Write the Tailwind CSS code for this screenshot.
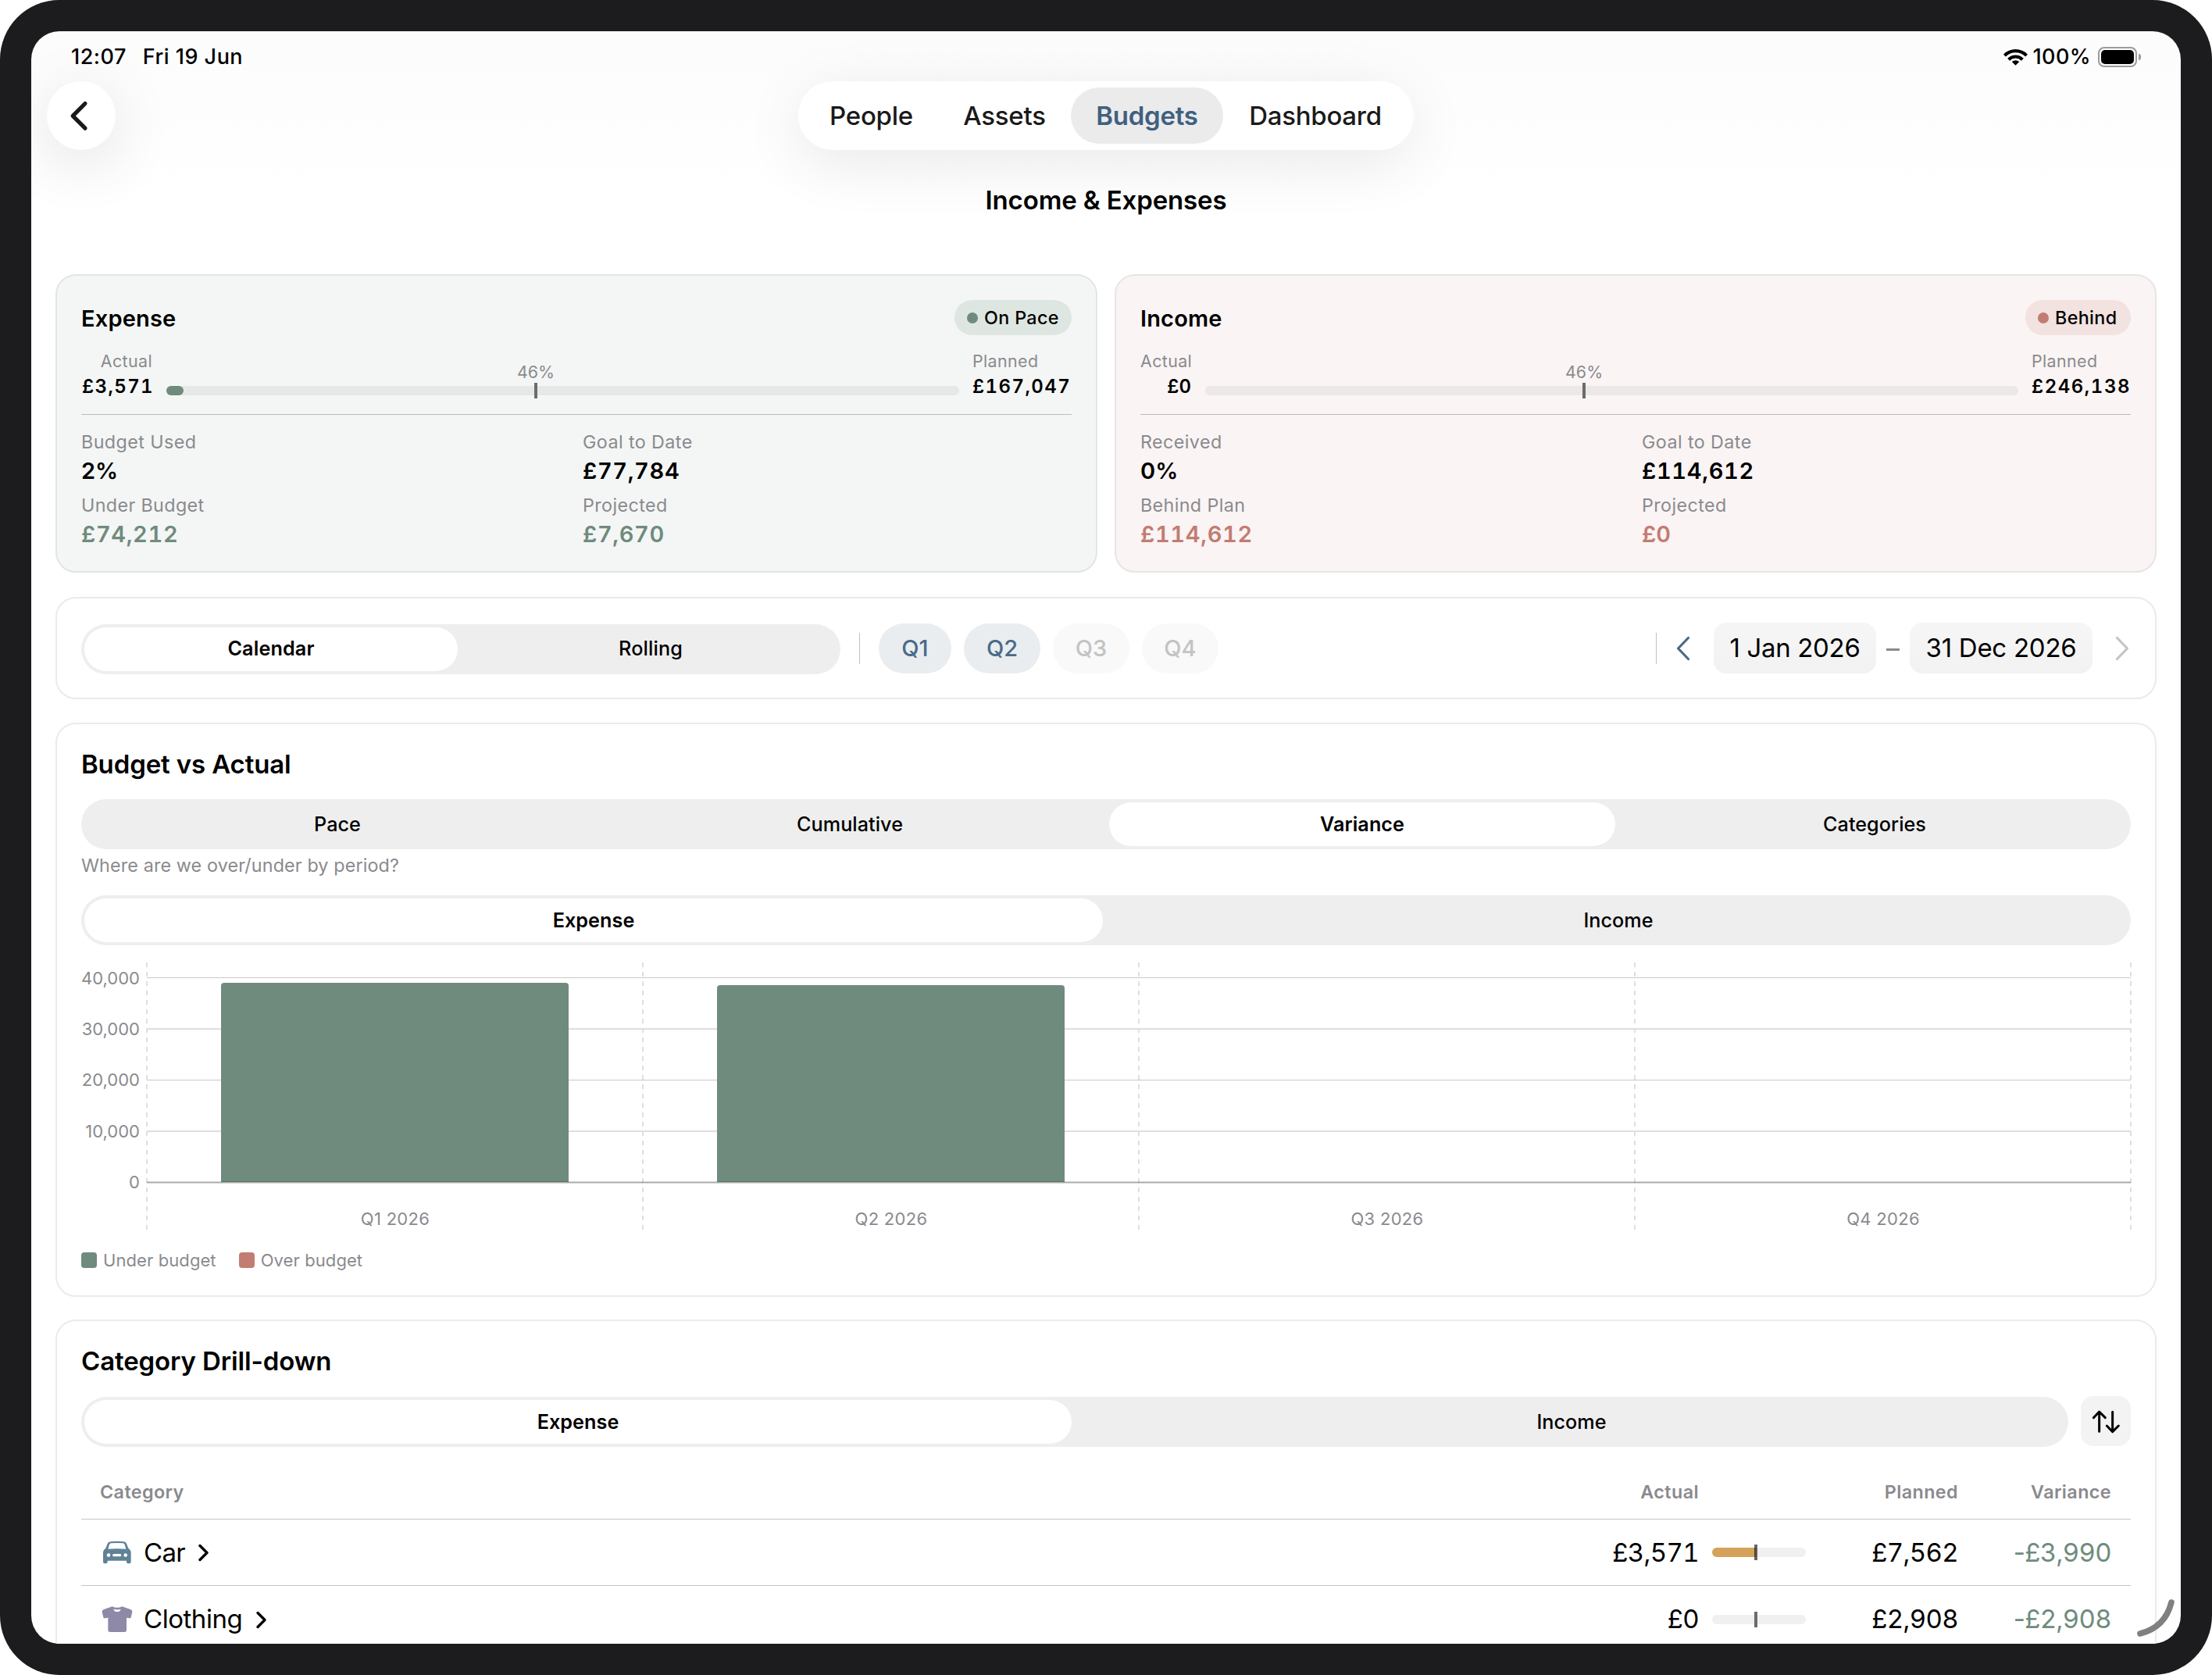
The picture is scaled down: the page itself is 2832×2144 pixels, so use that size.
<!DOCTYPE html>
<html lang="en">
<head>
  <meta charset="UTF-8" />
  <meta name="viewport" content="width=device-width, initial-scale=1.0">
  <title>Income &amp; Expenses</title>
  <script src="https://cdn.jsdelivr.net/npm/@tailwindcss/browser@4"></script>
</head>
<body class="bg-white font-['Inter','Liberation_Sans',sans-serif] text-black">
  <!-- Device frame -->
  <div class="w-[2832px] h-[2144px] bg-[#1c1c1e] rounded-[76px] p-10 overflow-hidden">
    <div class="relative h-full rounded-[36px] overflow-hidden bg-white bg-linear-to-b from-[#fcfcfc] from-0% to-white to-[220px]">

      <!-- Status bar -->
      <div class="flex h-16 items-center pl-[51px] pr-[51px] pt-[2px] text-[27px] font-medium tracking-[0.018em]">
        <span>12:07</span>
        <span class="ml-[21px]">Fri 19 Jun</span>
        <svg class="ml-auto w-[31px] h-[22px]" viewBox="0 0 30 21" fill="none" stroke="#000" stroke-width="3.9">
          <path d="M1.400 8.600A19 19 0 0 1 28.600 8.600" />
          <path d="M6.400 13.600A12.200 12.200 0 0 1 23.600 13.600" />
          <path d="M15 20.800l-4.600-4.400a6.600 6.600 0 0 1 9.200 0z" fill="#000" stroke="none" />
        </svg>
        <span class="ml-[7px] tracking-[0.015em]">100%</span>
        <div class="ml-[9px] w-[50px] h-[26px] rounded-[8px] border-2 border-[#9b9b9b] p-[2px]">
          <div class="h-full rounded-[5px] bg-black"></div>
        </div>
        <div class="ml-[2px] w-[3px] h-[8px] rounded-r-full bg-[#9b9b9b]"></div>
      </div>

      <!-- Navigation -->
      <header class="grid grid-cols-[88px_1fr_88px] px-5">
        <button class="flex size-[88px] items-center justify-center rounded-full bg-white shadow-[0_16px_80px_rgba(0,0,0,0.12)]">
          <svg class="size-[88px]" viewBox="0 0 88 88" fill="none" stroke="#1a1a1a" stroke-width="5.2" stroke-linecap="round" stroke-linejoin="round">
            <path d="M49 28.500L33.200 44.300L49 60.200" />
          </svg>
        </button>
        <nav class="mx-auto flex h-[88px] rounded-full bg-white p-2 text-[33px] font-medium tracking-[-0.008em] text-[#1a1a1a] shadow-[0_16px_80px_rgba(0,0,0,0.09)]">
          <a class="flex w-[171px] items-center justify-center pt-[2px]">People</a>
          <a class="flex w-[170px] items-center justify-center pt-[2px]">Assets</a>
          <a class="flex w-[195px] items-center justify-center rounded-full bg-[#ebebeb] pt-[2px] font-semibold text-[#40607f]">Budgets</a>
          <a class="flex w-[236px] items-center justify-center pt-[2px]">Dashboard</a>
        </nav>
      </header>
      <h1 class="flex h-32 items-center justify-center pt-[2px] text-[33px] font-semibold tracking-[-0.004em]">Income &amp; Expenses</h1>

      <main class="px-[31px] pt-[31px]">
        <!-- Summary cards -->
        <div class="grid grid-cols-2 gap-[22px]">
          <section class="h-[382px] rounded-[26px] border-2 border-[#e3e5e4] bg-[#f4f6f5] px-[31px] pt-[31px]">
            <div class="flex h-[45px] items-center justify-between">
              <h2 class="pt-[3px] text-[29px] font-semibold tracking-[0.006em]">Expense</h2>
              <span class="flex h-[45px] w-[150px] items-center gap-[8px] rounded-full bg-[#dee6e2] pl-4 pt-px text-[23.3px] font-medium tracking-[0.015em]"><i class="size-[14px] rounded-full bg-[#6f8b7d]"></i>On Pace</span>
            </div>
            <div class="mt-[19px] flex h-[66px]">
              <div class="flex w-[91px] flex-col items-end">
                <p class="h-7 text-[21.4px] leading-7 tracking-[0.018em] text-[#8a8a8e]">Actual</p>
                <p class="-mr-[2px] h-[38px] text-[24px] font-semibold leading-[38px] tracking-[0.058em] tabular-nums">£3,571</p>
              </div>
              <div class="relative ml-[18px] mr-4 mt-[46px] h-3 flex-1 rounded-full bg-[#e6e8e7]">
                <div class="h-full w-[22px] rounded-full bg-[#6f8b7d]"></div>
                <div class="absolute left-[46.4%] top-[-4px] h-5 w-1 bg-[#6b6c6c]"></div>
                <span class="absolute left-[46.6%] top-[-32px] -translate-x-1/2 text-[21.4px] leading-7 text-[#8a8a8e]">46%</span>
              </div>
              <div class="w-[128px] pl-px">
                <p class="h-7 text-[21.4px] leading-7 tracking-[0.018em] text-[#8a8a8e]">Planned</p>
                <p class="h-[38px] text-[24px] font-semibold leading-[38px] tracking-[0.06em] tabular-nums">£167,047</p>
              </div>
            </div>
            <div class="mt-4 h-px bg-[#bcbdbd]"></div>
            <div class="mt-5 grid grid-cols-2 gap-x-4 gap-y-[7px]">
              <div>
                <p class="text-[23.3px] leading-[30px] tracking-[0.018em] text-[#8a8a8e]">Budget Used</p>
                <p class="text-[29px] font-semibold leading-[44px]">2%</p>
              </div>
              <div>
                <p class="text-[23.3px] leading-[30px] tracking-[0.018em] text-[#8a8a8e]">Goal to Date</p>
                <p class="text-[29px] font-semibold leading-[44px] tracking-[0.022em] tabular-nums">£77,784</p>
              </div>
              <div>
                <p class="text-[23.3px] leading-[30px] tracking-[0.016em] text-[#8a8a8e]">Under Budget</p>
                <p class="text-[29px] font-semibold leading-[44px] tracking-[0.022em] tabular-nums text-[#6f8b7d]">£74,212</p>
              </div>
              <div>
                <p class="text-[23.3px] leading-[30px] tracking-[0.018em] text-[#8a8a8e]">Projected</p>
                <p class="text-[29px] font-semibold leading-[44px] tracking-[0.022em] tabular-nums text-[#6f8b7d]">£7,670</p>
              </div>
            </div>
          </section>

          <section class="h-[382px] rounded-[26px] border-2 border-[#e8e4e4] bg-[#faf4f4] px-[31px] pt-[31px]">
            <div class="flex h-[45px] items-center justify-between">
              <h2 class="pt-[3px] text-[29px] font-semibold tracking-[0.006em]">Income</h2>
              <span class="flex h-[45px] w-[135px] items-center gap-[8px] rounded-full bg-[#f2e2e0] pl-4 pt-px text-[23.3px] font-medium tracking-[0.015em]"><i class="size-[14px] rounded-full bg-[#c27c72]"></i>Behind</span>
            </div>
            <div class="mt-[19px] flex h-[66px]">
              <div class="w-[65px] text-right">
                <p class="h-7 text-[21.4px] leading-7 tracking-[0.018em] text-[#8a8a8e]">Actual</p>
                <p class="h-[38px] text-[24px] font-semibold leading-[38px] tabular-nums">£0</p>
              </div>
              <div class="relative ml-[18px] mr-[17px] mt-[46px] h-3 flex-1 rounded-full bg-[#ebe8e7]">
                <div class="absolute left-[46.4%] top-[-4px] h-5 w-1 bg-[#6b6c6c]"></div>
                <span class="absolute left-[46.6%] top-[-32px] -translate-x-1/2 text-[21.4px] leading-7 text-[#8a8a8e]">46%</span>
              </div>
              <div class="w-[127px]">
                <p class="h-7 text-[21.4px] leading-7 tracking-[0.018em] text-[#8a8a8e]">Planned</p>
                <p class="h-[38px] text-[24px] font-semibold leading-[38px] tracking-[0.064em] tabular-nums">£246,138</p>
              </div>
            </div>
            <div class="mt-4 h-px bg-[#bfbbbb]"></div>
            <div class="mt-5 grid grid-cols-2 gap-x-4 gap-y-[7px]">
              <div>
                <p class="text-[23.3px] leading-[30px] tracking-[0.018em] text-[#8a8a8e]">Received</p>
                <p class="text-[29px] font-semibold leading-[44px]">0%</p>
              </div>
              <div>
                <p class="text-[23.3px] leading-[30px] tracking-[0.018em] text-[#8a8a8e]">Goal to Date</p>
                <p class="text-[29px] font-semibold leading-[44px] tracking-[0.023em] tabular-nums">£114,612</p>
              </div>
              <div>
                <p class="text-[23.3px] leading-[30px] tracking-[0.016em] text-[#8a8a8e]">Behind Plan</p>
                <p class="text-[29px] font-semibold leading-[44px] tracking-[0.023em] tabular-nums text-[#c27c72]">£114,612</p>
              </div>
              <div>
                <p class="text-[23.3px] leading-[30px] tracking-[0.018em] text-[#8a8a8e]">Projected</p>
                <p class="text-[29px] font-semibold leading-[44px] tabular-nums text-[#c27c72]">£0</p>
              </div>
            </div>
          </section>
        </div>

        <!-- Period filter -->
        <section class="mt-[31px] flex h-[131px] items-center rounded-[26px] border-2 border-[#ebebeb] bg-white px-[31px]">
          <div class="mt-[2px] grid h-16 w-[972px] grid-cols-2 rounded-full bg-[#eeeeee] text-[25.2px] tracking-[0.005em]">
            <div class="m-1 flex items-center justify-center rounded-full bg-white pt-px font-semibold">Calendar</div>
            <div class="flex items-center justify-center pt-px font-medium">Rolling</div>
          </div>
          <div class="ml-6 h-10 w-px bg-[#c0c0c0]"></div>
          <div class="ml-6 flex gap-4 text-[29px] font-medium">
            <button class="h-16 w-[93px] rounded-full bg-[#e9edf0] pt-px text-[#4a6a87]">Q1</button>
            <button class="h-16 w-[98px] rounded-full bg-[#e9edf0] pt-px text-[#4a6a87]">Q2</button>
            <button class="h-16 w-[98px] rounded-full bg-[#f9f9f9] pt-px text-[#c3c3c4]">Q3</button>
            <button class="h-16 w-[98px] rounded-full bg-[#f9f9f9] pt-px text-[#c3c3c4]">Q4</button>
          </div>
          <div class="ml-auto h-10 w-px bg-[#c0c0c0]"></div>
          <svg class="ml-[22px] h-10 w-6" viewBox="0 0 24 40" fill="none" stroke="#4a6a87" stroke-width="3.2" stroke-linecap="round" stroke-linejoin="round"><path d="M18.500 6.500L5.500 20L18.500 33.500" /></svg>
          <div class="ml-[27px] flex h-[65px] w-[208px] items-center justify-center rounded-2xl bg-linear-to-b from-[#f6f6f6] to-[#f2f2f2] text-[33px] tracking-[-0.01em]">1 Jan 2026</div>
          <div class="flex w-[43px] justify-center pt-1"><div class="h-[3px] w-[17px] bg-[#8a8a8e]"></div></div>
          <div class="flex h-[65px] w-[234px] items-center justify-center rounded-2xl bg-linear-to-b from-[#f6f6f6] to-[#f2f2f2] text-[33px] tracking-[-0.008em]">31 Dec 2026</div>
          <svg class="ml-[26px] h-10 w-[23px]" viewBox="0 0 23 40" fill="none" stroke="#c4c4c6" stroke-width="3.2" stroke-linecap="round" stroke-linejoin="round"><path d="M5.500 6.500L18.500 20L5.500 33.500" /></svg>
        </section>

        <!-- Budget vs Actual -->
        <section class="mt-[30px] h-[735px] rounded-[26px] border-2 border-[#ebebeb] bg-white px-[31px] pt-[31px]">
          <h2 class="h-10 text-[33px] font-semibold leading-10 tracking-[-0.004em]">Budget vs Actual</h2>
          <div class="mt-[25px] grid h-16 grid-cols-4 rounded-full bg-[#eeeeee] text-[25.2px] font-medium tracking-[0.002em]">
            <div class="flex items-center justify-center pt-px">Pace</div>
            <div class="flex items-center justify-center pt-px">Cumulative</div>
            <div class="m-1 flex items-center justify-center rounded-full bg-white pt-px font-semibold">Variance</div>
            <div class="flex items-center justify-center pt-px">Categories</div>
          </div>
          <p class="h-[41px] text-[23.3px] leading-[41px] tracking-[0.006em] text-[#8a8a8e]">Where are we over/under by period?</p>
          <div class="mt-[18px] grid h-16 grid-cols-2 rounded-full bg-[#eeeeee] text-[25.2px] font-medium tracking-[0.002em]">
            <div class="m-1 flex items-center justify-center rounded-full bg-white pt-px font-semibold">Expense</div>
            <div class="flex items-center justify-center pt-px">Income</div>
          </div>

          <!-- Variance chart -->
          <svg class="mt-[22px] block h-[342px] w-[2626px] overflow-visible" viewBox="0 0 2626 342">
            <g stroke="#c9c9cb" stroke-width="1">
              <path d="M84 19.500H2624M84 150.500H2624" />
            </g>
            <g stroke="#dedee0" stroke-width="2">
              <path d="M84 85H2624M84 216H2624" />
            </g>
            <g stroke="#dfdfdf" stroke-width="2" stroke-dasharray="6 6">
              <path d="M84 0V342M719 0V342M1354 0V342M1989 0V342M2624 0V342" />
            </g>
            <path d="M179 281V30q0-4 4-4H620q4 0 4 4V281z" fill="#6f8b7d" />
            <path d="M814 281V33q0-4 4-4H1255q4 0 4 4V281z" fill="#6f8b7d" />
            <path d="M84 281.500H2624" stroke="#000" stroke-opacity="0.33" stroke-width="2" />
            <g fill="#8a8a8e" font-size="22" text-anchor="end">
              <text x="75" y="28">40,000</text>
              <text x="75" y="93">30,000</text>
              <text x="75" y="158">20,000</text>
              <text x="75" y="224">10,000</text>
              <text x="75" y="289">0</text>
            </g>
            <g fill="#8a8a8e" font-size="22" letter-spacing="0.3" text-anchor="middle">
              <text x="402" y="336">Q1 2026</text>
              <text x="1037" y="336">Q2 2026</text>
              <text x="1672" y="336">Q3 2026</text>
              <text x="2307" y="336">Q4 2026</text>
            </g>
          </svg>
          <div class="mt-[29px] flex h-5 items-center text-[22px] leading-5 tracking-[0.004em] text-[#8a8a8e]">
            <i class="mr-2 size-5 rounded bg-[#6f8b7d]"></i>Under budget
            <i class="ml-[29px] mr-2 size-5 rounded bg-[#c27c72]"></i>Over budget
          </div>
        </section>

        <!-- Category Drill-down -->
        <section class="mt-[29px] h-[500px] rounded-[26px] border-2 border-[#ebebeb] bg-white px-[31px] pt-[31px]">
          <h2 class="h-10 text-[33px] font-semibold leading-10 tracking-[-0.004em]">Category Drill-down</h2>
          <div class="mt-[26px] flex gap-4">
            <div class="grid h-16 flex-1 grid-cols-2 rounded-full bg-[#eeeeee] text-[25.2px] font-medium tracking-[0.002em]">
              <div class="m-1 flex items-center justify-center rounded-full bg-white pt-px font-semibold">Expense</div>
              <div class="flex items-center justify-center pt-px">Income</div>
            </div>
            <button class="-mt-px size-16 rounded-2xl bg-[#f3f3f3]">
              <svg class="size-16" viewBox="0 0 192 192" fill="none" stroke="#000" stroke-width="9" stroke-linecap="round" stroke-linejoin="round">
                <path d="M71 136V61M49 83L71 60L94 83" />
                <path d="M122 61V136M100 114L122 137L145 114" />
              </svg>
            </button>
          </div>
          <div class="flex h-[93px] items-center border-b border-[#c6c6c8] pl-6 pr-[25px] pt-6 text-[23.3px] font-semibold tracking-[0.018em] text-[#8a8a8e]">
            <span class="flex-1">Category</span>
            <span class="w-[200px] text-right">Actual</span>
            <span class="ml-[137px] w-[195px] text-right">Planned</span>
            <span class="w-[196px] text-right">Variance</span>
          </div>
          <div class="flex h-[85px] items-center border-b border-[#c6c6c8] pl-[26px] pr-[25px] text-[33px] tracking-[-0.02em]">
            <svg class="h-[33px] w-10" viewBox="30 32 120 99" fill="#5f8297" fill-rule="evenodd">
              <path d="M41 69Q47 65 49 57L53 46Q56 39 64 38.500Q89 36.500 115 38.500Q123 39 126 46L130 57Q132 65 138 69Q143 73 143 81V117Q143 123 137 123H132Q126 123 126 117V112Q89 113 53 112V117Q53 123 47 123H42Q36 123 36 117V81Q36 73 41 69ZM55 67Q89 64 124 67L119 50Q117 45 112 44.500Q89 43 67 44.500Q62 45 60 50ZM57 84a7 7 0 1 0 .1 0ZM122 84a7 7 0 1 0 .1 0ZM77 86a5 5 0 0 0 0 10H101a5 5 0 0 0 0-10Z" />
            </svg>
            <span class="ml-[14px] pt-px">Car</span>
            <svg class="ml-[15px] h-6 w-[18px]" viewBox="0 0 18 24" fill="none" stroke="#000" stroke-width="3.4" stroke-linecap="round" stroke-linejoin="round"><path d="M4 3.500L13 12.500L4 21.500" /></svg>
            <span class="ml-auto w-[200px] pt-px text-right tabular-nums">£3,571</span>
            <div class="relative ml-[17px] h-3 w-[120px] rounded-full bg-[#f0f0f0]">
              <div class="h-full w-[56px] rounded-l-full bg-[#d5a259]"></div>
              <div class="absolute left-[54px] top-[-4px] h-5 w-1 bg-black/60"></div>
            </div>
            <span class="w-[195px] pt-px text-right tabular-nums">£7,562</span>
            <span class="w-[196px] pt-px text-right tabular-nums text-[#6f8b7d]"><span class="normal-nums">-</span>£3,990</span>
          </div>
          <div class="flex h-[85px] items-center pl-[26px] pr-[25px] text-[33px] tracking-[-0.02em]">
            <svg class="h-[33px] w-10" viewBox="29 288 120 99" fill="#8f89a8" fill-rule="evenodd">
              <path d="M70 289Q89 298 108 289L140 300Q148 303 147 310L142 331Q141 335 136 334L125 332V379Q125 387 117 387H62Q54 387 54 379V332L42 334Q37 335 36 331L31 310Q30 303 38 300ZM75 299Q77 309 89 309Q101 309 103 299Q89 303 75 299Z" />
            </svg>
            <span class="ml-[14px] tracking-[-0.014em]">Clothing</span>
            <svg class="ml-[16px] h-6 w-[18px]" viewBox="0 0 18 24" fill="none" stroke="#000" stroke-width="3.4" stroke-linecap="round" stroke-linejoin="round"><path d="M4 3.500L13 12.500L4 21.500" /></svg>
            <span class="ml-auto w-[200px] text-right tabular-nums">£0</span>
            <div class="relative ml-[17px] h-3 w-[120px] rounded-full bg-[#f0f0f0]">
              <div class="absolute left-[54px] top-[-4px] h-5 w-1 bg-[#6b6b6b]"></div>
            </div>
            <span class="w-[195px] text-right tabular-nums">£2,908</span>
            <span class="w-[196px] text-right tabular-nums text-[#6f8b7d]"><span class="normal-nums">-</span>£2,908</span>
          </div>
        </section>
      </main>

      <!-- Window resize handle -->
      <svg class="absolute bottom-[8px] right-[7px] size-[50px]" viewBox="0 0 50 50" fill="none" stroke="#808080" stroke-width="7.6" stroke-linecap="round">
        <path d="M45 5Q37 37 5 45" />
      </svg>
    </div>
  </div>
</body>
</html>
